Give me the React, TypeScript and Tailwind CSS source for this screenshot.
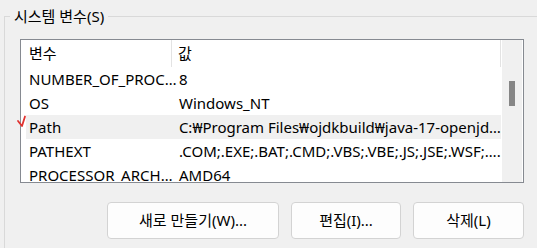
const ROWS = [
  { name: "NUMBER_OF_PROC…", value: "8" },
  { name: "OS", value: "Windows_NT" },
  { name: "Path", value: "C:₩Program Files₩ojdkbuild₩java-17-openjd…", active: true },
  { name: "PATHEXT", value: ".COM;.EXE;.BAT;.CMD;.VBS;.VBE;.JS;.JSE;.WSF;…." },
  { name: "PROCESSOR_ARCH…", value: "AMD64" },
];

export default function App() {
  return (
    <div className="relative h-[248px] w-[537px] overflow-hidden bg-[#f0f0f0] font-['Noto_Sans','Noto_Sans_CJK_KR',sans-serif] text-[15px] text-black">
      <div className="relative ml-[4px] mt-[16px] flex h-[232px] flex-col border-l border-t border-[#d9d9d9] pl-[15px] pt-[22px]">
        <span className="absolute left-[5px] top-[-12px] bg-[#f0f0f0] px-[4px] leading-[22px]">
          시스템 변수(S)
        </span>

        <VarList />

        <div className="ml-[87px] mt-[19px] flex gap-[12px]">
          <Btn w="w-[172px]">새로 만들기(W)...</Btn>
          <Btn w="w-[110px]">편집(I)...</Btn>
          <Btn w="w-[111px]">삭제(L)</Btn>
        </div>
      </div>

      {/* red pen mark next to Path */}
      <svg className="absolute left-[16px] top-[115px]" width="12" height="14" viewBox="0 0 12 14">
        <polyline
          points="2,6 6,11 9,1.5"
          fill="none"
          stroke="#e0312e"
          strokeWidth="1.8"
          strokeLinecap="round"
          strokeLinejoin="round"
        />
      </svg>
    </div>
  );
}

function VarList() {
  return (
    <div className="flex h-[144px] w-[504px] border border-[#868a91] bg-white">
      <div className="flex-1 overflow-hidden">
        <div className="ml-[5px] flex h-[27px] w-[475px] items-center border-r border-[#e3e3e3]">
          <div className="flex h-full w-[146px] items-center border-r border-[#e3e3e3] pl-[3px]">변수</div>
          <div className="pl-[6px]">값</div>
        </div>
        {ROWS.map((r) => (
          <div
            key={r.name}
            className={`ml-[5px] flex h-[24px] w-[475px] items-center whitespace-nowrap ${r.active ? "bg-[#f0f0f0]" : ""}`}
          >
            <div className="w-[146px] pl-[3px]">{r.name}</div>
            <div className="pl-[7px]">{r.value}</div>
          </div>
        ))}
      </div>
      <div className="mr-[1px] w-[20px] bg-[#f0f0f0]">
        <div className="ml-[7px] mt-[41px] h-[25px] w-[6px] bg-[#868686]" />
      </div>
    </div>
  );
}

function Btn({ w, children }: { w: string; children: React.ReactNode }) {
  return (
    <div
      className={`${w} flex h-[37px] items-center justify-center rounded-[4px] border border-[#d3d3d3] bg-[#fdfdfd]`}
    >
      {children}
    </div>
  );
}
